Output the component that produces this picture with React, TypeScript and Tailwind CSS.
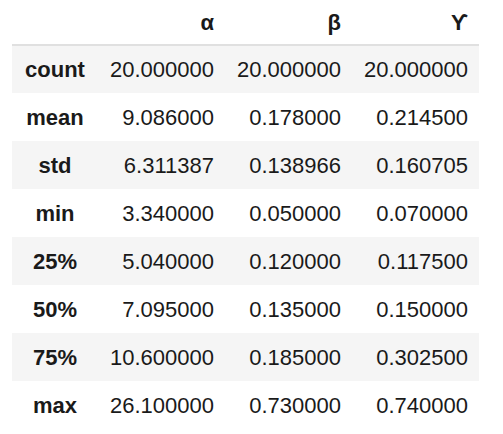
const cols = ['α', 'β', 'ϒ']

const rows: [string, string, string, string][] = [
  ['count', '20.000000', '20.000000', '20.000000'],
  ['mean', '9.086000', '0.178000', '0.214500'],
  ['std', '6.311387', '0.138966', '0.160705'],
  ['min', '3.340000', '0.050000', '0.070000'],
  ['25%', '5.040000', '0.120000', '0.117500'],
  ['50%', '7.095000', '0.135000', '0.150000'],
  ['75%', '10.600000', '0.185000', '0.302500'],
  ['max', '26.100000', '0.730000', '0.740000'],
]

export default function App() {
  return (
    <div className="w-[503px] h-[434px] bg-white pl-3 font-['Liberation_Sans',Arial,sans-serif] text-[22px] text-[#1a1a1a]">
      <table className="border-collapse">
        <thead>
          <tr className="h-[45px] border-b-2 border-[#e0e0e0]">
            <th className="w-[86px]"></th>
            {cols.map((c) => (
              <th key={c} className="w-[127px] pr-[11px] text-right font-bold">
                {c}
              </th>
            ))}
          </tr>
        </thead>
        <tbody>
          {rows.map((r, i) => (
            <tr key={r[0]} className={i % 2 === 0 ? 'h-12 bg-[#f5f5f5]' : 'h-12'}>
              <th className="text-center font-bold">{r[0]}</th>
              {r.slice(1).map((v, j) => (
                <td key={j} className="pr-[11px] text-right">
                  {v}
                </td>
              ))}
            </tr>
          ))}
        </tbody>
      </table>
    </div>
  )
}
